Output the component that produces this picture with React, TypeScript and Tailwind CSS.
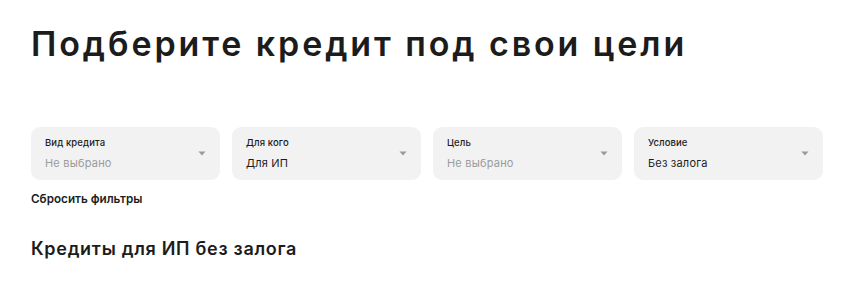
const filters = [
  { label: "Вид кредита", value: "Не выбрано", empty: true },
  { label: "Для кого", value: "Для ИП", empty: false },
  { label: "Цель", value: "Не выбрано", empty: true },
  { label: "Условие", value: "Без залога", empty: false },
];

function Caret() {
  return (
    <svg width="8" height="5" viewBox="0 0 8 5" className="shrink-0">
      <path d="M0.5 0.5h7L4 4.5z" fill="#9a9a9a" />
    </svg>
  );
}

export default function App() {
  return (
    <div className="w-[850px] h-[285px] bg-white pl-[31px] pr-[27px] text-[#1c1c1c] font-['Inter',sans-serif]">
      <h1 className="pt-[24px] text-[34px] leading-[40px] font-semibold tracking-[2.9px]">
        Подберите кредит под свои цели
      </h1>
      <div className="mt-[63px] grid grid-cols-4 gap-[12px]">
        {filters.map((f) => (
          <div
            key={f.label}
            className="h-[53px] rounded-[9px] bg-[#f2f2f2] pl-[14px] pr-[14px] flex items-center justify-between"
          >
            <div className="flex flex-col">
              <span className="text-[9.5px] leading-[12px] font-medium tracking-[0.1px]">{f.label}</span>
              <span
                className={
                  f.empty
                    ? "mt-[7px] text-[11px] leading-[14px] tracking-[0.2px] text-[#9b9b9b]"
                    : "mt-[7px] text-[11px] leading-[14px] tracking-[0.2px]"
                }
              >
                {f.value}
              </span>
            </div>
            <Caret />
          </div>
        ))}
      </div>
      <div className="mt-[11px] text-[11.7px] leading-[16px] font-semibold">Сбросить фильтры</div>
      <h2 className="mt-[30px] text-[18px] leading-[24px] font-semibold tracking-[0.7px]">
        Кредиты для ИП без залога
      </h2>
    </div>
  );
}
